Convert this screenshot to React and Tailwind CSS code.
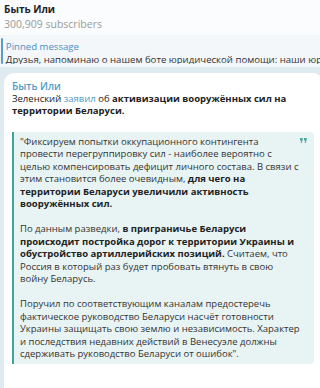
import React from 'react';

const QuoteMark = () => (
  <svg width="7" height="5" viewBox="0 0 7 5" className="absolute right-[7px] top-[6px]">
    <path d="M0 0h2.6v2.2L1.6 5H0.6l0.8-2.6H0z M4 0h2.6v2.2L5.6 5H4.6l0.8-2.6H4z" fill="#46a39c" />
  </svg>
);

const L = ({ children }) => <div className="whitespace-nowrap">{children}</div>;
const B = ({ children }) => <b className="font-bold text-[#222]">{children}</b>;

const App = () => (
  <div
    className="w-[320px] h-[388px] overflow-hidden flex flex-col bg-[#fbfcfd] text-[#222] text-[9.5px] leading-[12.5px]"
    style={{ fontFamily: '"Open Sans", "Noto Sans", sans-serif' }}
  >
    {/* Header */}
    <div className="px-[4px] pt-[2px] h-[35px] shrink-0">
      <div className="font-bold text-[10px] leading-[14px] text-[#222]">Быть Или</div>
      <div className="text-[10.5px] leading-[14px] mt-[1px] text-[#9a9a9a]">300,909 subscribers</div>
    </div>

    {/* Pinned */}
    <div className="h-[32px] shrink-0 bg-[#f3f7fa] flex items-stretch py-[3px]">
      <div className="w-[2px] bg-[#5a9bc8] ml-[1px] rounded-full" />
      <div className="pl-[3px] pt-[2px] whitespace-nowrap overflow-hidden text-[9.6px]">
        <div className="text-[#4a8fc2] leading-[13px]">Pinned message</div>
        <div className="text-[#333] leading-[13px]">Друзья, напоминаю о нашем боте юридической помощи: наши юристы</div>
      </div>
    </div>

    {/* Chat */}
    <div className="flex-1 flex bg-[#e0ebf1] pt-[6px] pl-[4px]">
      <div className="flex-1 bg-white rounded-t-[10px] pl-[8px] pr-[9px] pt-[7px]">
        <div className="text-[#4e9cc6] font-semibold text-[10px]">Быть Или</div>
        <L>
          Зеленский <span className="text-[#4e9cc6]">заявил</span> об <B>активизации вооружённых сил на</B>
        </L>
        <L>
          <B>территории Беларуси.</B>
        </L>

        <div className="relative mt-[14px] bg-[#e8f3f3] border-l-2 border-[#46a39c] rounded-r-[4px] pl-[6px] pr-[14px] pt-[4px] pb-[3px] text-[#333]">
          <QuoteMark />
          <L>"Фиксируем попытки оккупационного контингента</L>
          <L>провести перегруппировку сил - наиболее вероятно с</L>
          <L>целью компенсировать дефицит личного состава. В связи с</L>
          <L>
            этим становится более очевидным, <B>для чего на</B>
          </L>
          <L>
            <B>территории Беларуси увеличили активность</B>
          </L>
          <L>
            <B>вооружённых сил.</B>
          </L>

          <div className="mt-[12.5px]">
            <L>
              По данным разведки, <B>в приграничье Беларуси</B>
            </L>
            <L>
              <B>происходит постройка дорог к территории Украины и</B>
            </L>
            <L>
              <B>обустройство артиллерийских позиций.</B> Считаем, что
            </L>
            <L>Россия в который раз будет пробовать втянуть в свою</L>
            <L>войну Беларусь.</L>
          </div>

          <div className="mt-[12.5px]">
            <L>Поручил по соответствующим каналам предостеречь</L>
            <L>фактическое руководство Беларуси насчёт готовности</L>
            <L>Украины защищать свою землю и независимость. Характер</L>
            <L>и последствия недавних действий в Венесуэле должны</L>
            <L>сдерживать руководство Беларуси от ошибок".</L>
          </div>
        </div>
      </div>
      <div className="w-[6px] ml-[1px] bg-[#d0e1ea]" />
    </div>
  </div>
);

export default App;
